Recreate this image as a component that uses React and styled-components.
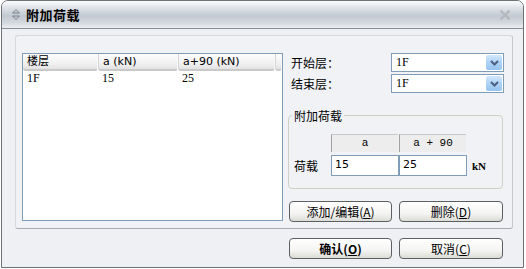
import React from "react";
import styled, { createGlobalStyle } from "styled-components";

const GlobalStyle = createGlobalStyle`
  html, body {
    margin: 0;
    padding: 0;
    background: #ffffff;
  }
  body {
    font-family: "Noto Sans CJK SC", "DejaVu Sans", sans-serif;
    font-size: 12px;
    color: #000;
  }
`;

const floors = [{ name: "1F", a: "15", b: "25" }];

const Chevron = () => (
  <svg viewBox="0 0 9 6" width="9" height="6">
    <path d="M1 1 L4.5 4.5 L8 1" fill="none" stroke="#4d5f80" strokeWidth="2" />
  </svg>
);

const App = () => {
  return (
    <>
      <GlobalStyle />
      <Window>
        <TitleBar>
          <TitleIcon viewBox="0 0 8 11" width="8" height="11">
            <path d="M4 0.5 L7.5 4 L0.5 4 Z" fill="#c9ccd2" stroke="#6b707a" strokeWidth="0.8" />
            <path d="M4 10.5 L7.5 7 L0.5 7 Z" fill="#c9ccd2" stroke="#6b707a" strokeWidth="0.8" />
          </TitleIcon>
          <Title>附加荷载</Title>
          <CloseIcon viewBox="0 0 12 12" width="12" height="12">
            <path d="M1.5 1.5 L10.5 10.5 M10.5 1.5 L1.5 10.5" stroke="#b4b8be" strokeWidth="2.4" />
          </CloseIcon>
        </TitleBar>
        <Body>
          <Panel>
            <ListBox>
              <ListHeader>
                <HeadCell $w={75}>楼层</HeadCell>
                <HeadCell $w={80}>a (kN)</HeadCell>
                <HeadCell $w={97}>a+90 (kN)</HeadCell>
                <HeadCell $w={7} />
              </ListHeader>
              {floors.map((f) => (
                <ListRow key={f.name}>
                  <RowCell $w={75}>{f.name}</RowCell>
                  <RowCell $w={80}>{f.a}</RowCell>
                  <RowCell $w={97}>{f.b}</RowCell>
                </ListRow>
              ))}
            </ListBox>
            <Side>
              <FieldRow>
                <FieldLabel>开始层：</FieldLabel>
                <Combo>
                  <ComboText>1F</ComboText>
                  <ComboButton>
                    <Chevron />
                  </ComboButton>
                </Combo>
              </FieldRow>
              <FieldRow>
                <FieldLabel>结束层：</FieldLabel>
                <Combo>
                  <ComboText>1F</ComboText>
                  <ComboButton>
                    <Chevron />
                  </ComboButton>
                </Combo>
              </FieldRow>
              <GroupBox>
                <Legend>附加荷载</Legend>
                <LoadGrid>
                  <span />
                  <ColHead>a</ColHead>
                  <ColHead>a + 90</ColHead>
                  <span />
                  <LoadLabel>荷载</LoadLabel>
                  <Input>15</Input>
                  <Input>25</Input>
                  <Unit>kN</Unit>
                </LoadGrid>
              </GroupBox>
              <ButtonRow>
                <Button $w={103}>添加/编辑(<u>A</u>)</Button>
                <Button $w={104}>删除(<u>D</u>)</Button>
              </ButtonRow>
            </Side>
          </Panel>
          <Footer>
            <Button $w={103} $bold>确认(<u>O</u>)</Button>
            <Button $w={104}>取消(<u>C</u>)</Button>
          </Footer>
        </Body>
      </Window>
    </>
  );
};

export default App;

const Window = styled.div`
  box-sizing: border-box;
  margin-left: 1px;
  width: 523px;
  height: 268px;
  border: 1px solid #6e7175;
  border-radius: 7px 7px 0 0;
  background: #eef0f3;
  display: flex;
  flex-direction: column;
  overflow: hidden;
`;

const TitleBar = styled.div`
  height: 27px;
  border-bottom: 1px solid #8a8f96;
  background: linear-gradient(
    to bottom,
    #fbfcfd 0%,
    #dfe3e8 25%,
    #c3c9d1 55%,
    #d3d8de 80%,
    #eceef1 100%
  );
  display: flex;
  align-items: center;
  padding-left: 10px;
  padding-right: 12px;
`;

const TitleIcon = styled.svg`
  flex: none;
`;

const Title = styled.div`
  margin-left: 6px;
  font-weight: bold;
  font-size: 13px;
  letter-spacing: 0.5px;
  flex: 1;
`;

const CloseIcon = styled.svg`
  flex: none;
`;

const Body = styled.div`
  flex: 1;
  display: flex;
  flex-direction: column;
  padding: 6px 0 0 13px;
`;

const Panel = styled.div`
  box-sizing: border-box;
  width: 498px;
  height: 194px;
  border: 1px solid #d6d8dd;
  border-bottom-color: #a9adb3;
  border-right-color: #c4c7cc;
  border-radius: 3px;
  background: #f1f2f5;
  display: flex;
  padding: 17px 0 0 6px;
  gap: 5px;
`;

const ListBox = styled.div`
  box-sizing: border-box;
  width: 261px;
  height: 168px;
  border: 1px solid #7f9db9;
  background: #fff;
`;

const ListHeader = styled.div`
  display: flex;
  height: 17px;
`;

const HeadCell = styled.div`
  box-sizing: border-box;
  width: ${(p) => p.$w}px;
  height: 17px;
  padding-left: 4px;
  line-height: 16px;
  font-family: "DejaVu Sans", "Noto Sans CJK SC", sans-serif;
  font-size: 11px;
  background: linear-gradient(to bottom, #fdfdfd 0%, #efefef 70%, #e2e2e2 100%);
  border-right: 1px solid #f8f8f8;
  border-bottom: 2px solid #c9c9c9;
  border-radius: 0 0 3px 3px;
  & + & {
    border-left: 1px solid #d5d5d5;
  }
`;

const ListRow = styled.div`
  display: flex;
  height: 15px;
  line-height: 15px;
`;

const RowCell = styled.div`
  box-sizing: border-box;
  width: ${(p) => p.$w}px;
  padding-left: 4px;
  font-family: "Liberation Serif", "Noto Sans CJK SC", serif;
  font-size: 12px;
`;

const Side = styled.div`
  width: 216px;
  display: flex;
  flex-direction: column;
`;

const FieldRow = styled.div`
  display: flex;
  align-items: center;
  height: 19px;
  margin-bottom: 2px;
`;

const FieldLabel = styled.div`
  width: 103px;
  padding-left: 3px;
  box-sizing: border-box;
  font-size: 12px;
`;

const Combo = styled.div`
  box-sizing: border-box;
  width: 113px;
  height: 19px;
  border: 1px solid #7f9db9;
  background: #fff;
  display: flex;
  align-items: center;
  padding: 1px;
`;

const ComboText = styled.div`
  flex: 1;
  padding-left: 3px;
  font-family: "Liberation Serif", serif;
  font-size: 12px;
`;

const ComboButton = styled.div`
  width: 16px;
  height: 15px;
  border-radius: 2px;
  background: linear-gradient(to bottom, #d4e8fc 0%, #add2f6 50%, #96c3f0 100%);
  display: flex;
  align-items: center;
  justify-content: center;
`;

const GroupBox = styled.div`
  box-sizing: border-box;
  margin-top: 20px;
  width: 215px;
  height: 74px;
  border: 1px solid #d0d0c8;
  border-radius: 4px;
`;

const Legend = styled.div`
  display: inline-block;
  margin: -8px 0 0 3px;
  padding: 0 2px;
  background: #f1f2f5;
  font-size: 12px;
  line-height: 15px;
  vertical-align: top;
`;

const LoadGrid = styled.div`
  display: grid;
  grid-template-columns: 42px 68px 68px auto;
  grid-template-rows: 18px 21px;
  row-gap: 3px;
  margin-top: 1px;
  align-items: center;
`;

const ColHead = styled.div`
  box-sizing: border-box;
  width: 67px;
  height: 18px;
  background: #ededed;
  border-top: 1px solid #c8c8c8;
  border-left: 1px solid #a0a0a0;
  text-align: center;
  line-height: 17px;
  font-family: "Liberation Mono", monospace;
  font-size: 11px;
`;

const LoadLabel = styled.div`
  padding-left: 5px;
  font-size: 12px;
`;

const Input = styled.div`
  box-sizing: border-box;
  width: 68px;
  height: 21px;
  border: 1px solid #7f9db9;
  background: #fff;
  padding-left: 3px;
  line-height: 18px;
  font-family: "DejaVu Sans", sans-serif;
  font-size: 11px;
`;

const Unit = styled.div`
  padding-left: 5px;
  font-family: "Liberation Serif", serif;
  font-size: 11px;
  font-weight: bold;
`;

const ButtonRow = styled.div`
  display: flex;
  gap: 7px;
  margin-top: 12px;
  padding-left: 1px;
`;

const Button = styled.div`
  box-sizing: border-box;
  width: ${(p) => p.$w}px;
  height: 21px;
  border: 1px solid #5c5f63;
  border-radius: 4px;
  background: linear-gradient(to bottom, #ffffff 0%, #f4f4f2 60%, #dcdcd6 100%);
  display: flex;
  align-items: center;
  justify-content: center;
  font-size: 12px;
  font-weight: ${(p) => (p.$bold ? "bold" : "normal")};
  u {
    text-underline-offset: 1px;
  }
`;

const Footer = styled.div`
  display: flex;
  gap: 7px;
  margin-top: 9px;
  padding-left: 274px;
`;
